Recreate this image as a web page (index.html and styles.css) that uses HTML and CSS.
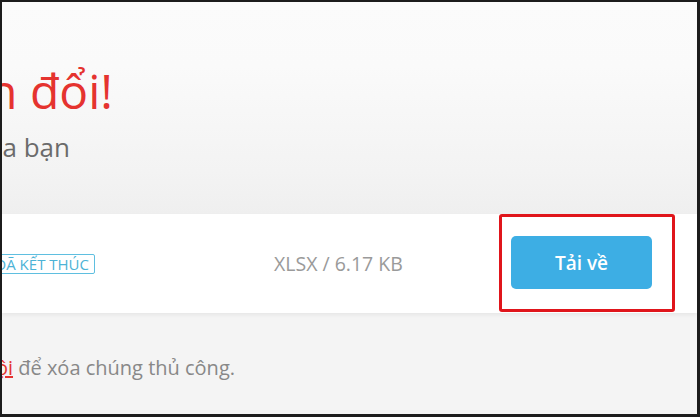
FILE: index.html
```html
<!DOCTYPE html>
<html lang="vi">
<head>
<meta charset="utf-8">
<title>Chuyển đổi hoàn tất</title>
<link rel="stylesheet" href="styles.css">
</head>
<body>
<div class="frame">
  <header class="hero">
    <div class="clip-line title-line">
      <h1 class="title">Tệp của bạn đã được chuyển đổi!</h1>
    </div>
    <div class="clip-line sub-line">
      <p class="subtitle">Tải xuống tệp đã chuyển đổi của bạn</p>
    </div>
  </header>

  <section class="card">
    <div class="status">
      <span class="badge">Đã kết thúc</span>
    </div>
    <div class="size">XLSX / 6.17 KB</div>
    <div class="highlight">
      <button class="download" type="button">Tải về</button>
    </div>
  </section>

  <footer class="note">
    <div class="clip-line note-line">
      <p class="note-text">Tệp sẽ tự động bị xóa sau 24 giờ. Hãy mở <a href="#" class="link">trang quản lý nội</a> để xóa chúng thủ công.</p>
    </div>
  </footer>
</div>
</body>
</html>
```

FILE: styles.css
```css
* {
  box-sizing: border-box;
}

html, body {
  margin: 0;
  padding: 0;
  width: 700px;
  height: 417px;
  overflow: hidden;
  background: #1c1c1c;
}

.frame {
  width: 700px;
  height: 417px;
  border-style: solid;
  border-color: #1c1c1c;
  border-width: 2px 3px 3px 2px;
  background: #f4f4f4;
  display: flex;
  flex-direction: column;
  overflow: hidden;
  font-family: "Open Sans", "Noto Sans", sans-serif;
}

/* lines whose left part is cut off by the crop: right edge is fixed */
.clip-line {
  display: flex;
  justify-content: flex-end;
  white-space: nowrap;
}

.hero {
  height: 212px;
  flex: none;
  background: linear-gradient(#fbfbfb 0%, #fafafa 30%, #f3f3f3 80%, #efefef 100%);
  padding-top: 59px;
}

.title-line {
  width: 111px;
}

.title {
  margin: 0;
  font-size: 48px;
  line-height: 60px;
  font-weight: 400;
  color: #e5332f;
}

.sub-line {
  width: 68px;
  margin-top: 9px;
}

.subtitle {
  margin: 0;
  font-size: 26px;
  line-height: 34px;
  color: #6b6b6b;
}

.card {
  height: 99px;
  flex: none;
  background: #ffffff;
  display: flex;
  align-items: center;
  box-shadow: 0 2px 4px rgba(0, 0, 0, 0.06);
}

.status {
  width: 93px;
  flex: none;
  display: flex;
  justify-content: flex-end;
  white-space: nowrap;
}

.badge {
  display: inline-block;
  height: 20px;
  line-height: 18px;
  padding: 0 5px;
  border: 1px solid #5fbfe0;
  border-radius: 2px;
  font-size: 15px;
  text-transform: uppercase;
  color: #4cb3d6;
}

.size {
  margin-left: 179px;
  font-size: 19.5px;
  color: #9a9a9a;
  white-space: nowrap;
}

.highlight {
  margin-left: auto;
  margin-right: 22px;
  border: 3px solid #e0151b;
  border-radius: 3px;
  padding: 19px 20px 20px 9px;
  align-self: flex-start;
}

.download {
  display: block;
  width: 141px;
  height: 53px;
  border: 0;
  border-radius: 5px;
  background: #3daee4;
  color: #ffffff;
  font-family: "Open Sans", "Noto Sans", sans-serif;
  font-size: 19px;
  font-weight: 600;
  padding: 0;
}

.note {
  flex: 1;
  padding-top: 42px;
}

.note-line {
  width: 233px;
}

.note-text {
  margin: 0;
  font-size: 20px;
  line-height: 26px;
  color: #888888;
}

.link {
  color: #e5332f;
  text-decoration: underline;
}
```
